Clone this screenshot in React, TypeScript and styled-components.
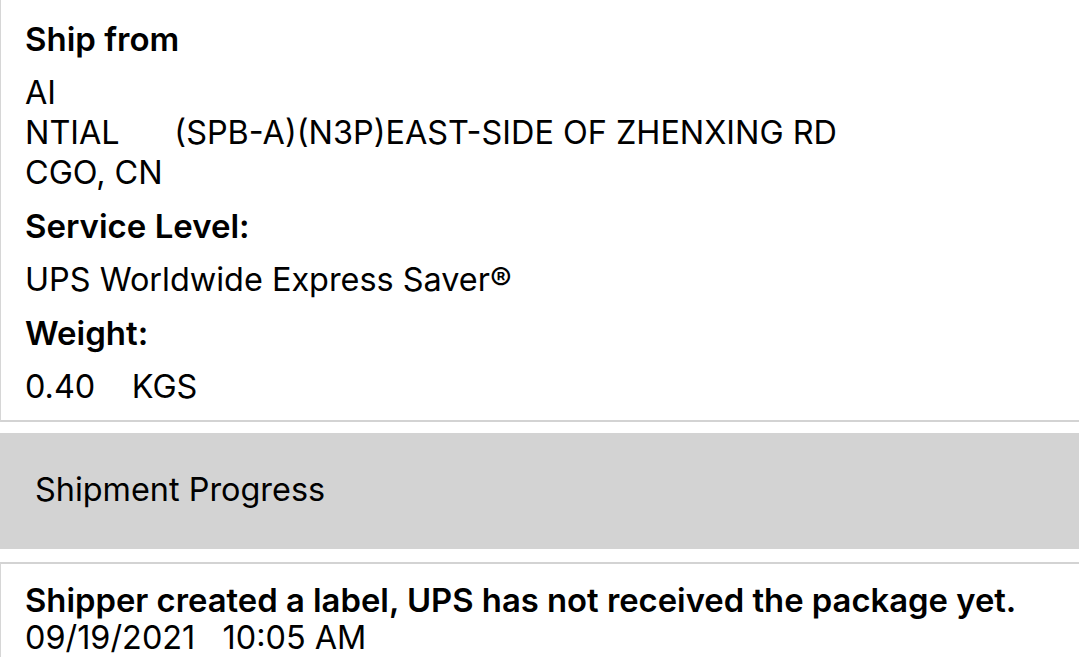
import React from "react";
import styled, { createGlobalStyle } from "styled-components";

const Global = createGlobalStyle`
  html, body { margin: 0; padding: 0; background: #ffffff; }
  body { font-family: Inter, "Liberation Sans", Arial, sans-serif; color: #000; overflow: hidden; }
`;

const Page = styled.div`
  width: 1079px;
  height: 672px;
  display: flex;
  flex-direction: column;
`;

const Card = styled.section<{ $top?: boolean }>`
  border-left: 1px solid #d6d6d6;
  border-top: ${(p) => (p.$top ? "none" : "2px solid #d3d3d3")};
  border-bottom: ${(p) => (p.$top ? "2px solid #d3d3d3" : "none")};
  padding: ${(p) => (p.$top ? "19px 0 13px 24px" : "17px 0 0 24px")};
  display: flex;
  flex-direction: column;
`;

const Label = styled.div`
  font-size: 33px;
  font-weight: 600;
  line-height: 40px;
  margin-bottom: 14px;
`;

const Value = styled.div<{ $gapAfter?: boolean }>`
  font-size: 32.4px;
  font-weight: 400;
  line-height: 40px;
  white-space: pre;
  margin-bottom: ${(p) => (p.$gapAfter ? "13px" : "0")};
`;

const Band = styled.div`
  margin-top: 11px;
  margin-bottom: 13px;
  height: 116px;
  box-sizing: border-box;
  padding: 0 0 4px 35px;
  background: #d3d3d3;
  display: flex;
  align-items: center;
  font-size: 32.4px;
`;

const EventTitle = styled.div`
  font-size: 32.8px;
  font-weight: 600;
  line-height: 38px;
`;

const EventTime = styled.div`
  font-size: 32.4px;
  line-height: 38px;
  white-space: pre;
`;

export default function App() {
  return (
    <Page>
      <Global />
      <Card $top>
        <Label>Ship from</Label>
        <Value>AI</Value>
        <Value>{"NTIAL      (SPB-A)(N3P)EAST-SIDE OF ZHENXING RD"}</Value>
        <Value $gapAfter>CGO, CN</Value>
        <Label>Service Level:</Label>
        <Value $gapAfter>UPS Worldwide Express Saver®</Value>
        <Label>Weight:</Label>
        <Value>{"0.40    KGS"}</Value>
      </Card>
      <Band>Shipment Progress</Band>
      <Card>
        <EventTitle>Shipper created a label, UPS has not received the package yet.</EventTitle>
        <EventTime>{"09/19/2021   10:05 AM"}</EventTime>
      </Card>
    </Page>
  );
}
